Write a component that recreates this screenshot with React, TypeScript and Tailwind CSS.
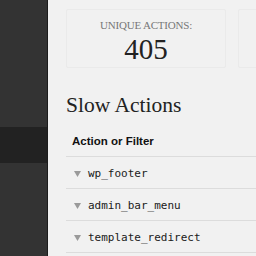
const rows = ["wp_footer", "admin_bar_menu", "template_redirect"]

const App = () => {
  return (
    <div className="flex h-screen w-full overflow-hidden bg-[#f1f1f1]">
      <div className="w-[48px] shrink-0 flex flex-col bg-[#333] border-r border-[#1c1c1c]">
        <div className="h-[127px]" />
        <div className="h-[36px] bg-[#222]" />
      </div>

      <div className="flex flex-col pl-[18px] pt-[9px] min-w-0">
        <div className="flex gap-[12px]">
          <div className="w-[160px] h-[59px] shrink-0 border border-[#eaeaea] rounded-[2px] flex flex-col items-center pt-[8px] font-['Liberation_Serif',serif]">
            <span className="text-[11px] leading-[14px] text-[#777] tracking-[-0.2px]">UNIQUE ACTIONS:</span>
            <span className="text-[29px] leading-[32px] text-[#222] mt-[1px]">405</span>
          </div>
          <div className="w-[160px] h-[59px] shrink-0 border border-[#eaeaea] rounded-[2px]" />
        </div>

        <h2 className="font-['Liberation_Serif',serif] text-[21.5px] leading-[28px] text-[#222] mt-[23px]">
          Slow Actions
        </h2>

        <div className="w-[260px] mt-[6px]">
          <div className="h-[32px] flex items-center pl-[6px] pt-[3px] border-b border-[#dcdcdc] font-['Liberation_Sans',sans-serif] font-bold text-[11.5px] text-[#111]">
            Action or Filter
          </div>
          {rows.map((r) => (
            <div key={r} className="h-[32px] flex items-center pt-[3px] border-b border-[#dcdcdc]">
              <svg width="7" height="6" viewBox="0 0 7 6" className="ml-[8px] mr-[7px]">
                <path d="M0 0h7L3.5 6z" fill="#9a9a9a" />
              </svg>
              <span className="font-['DejaVu_Sans_Mono',monospace] text-[11px] text-[#1a1a1a]">{r}</span>
            </div>
          ))}
        </div>
      </div>
    </div>
  )
}

export default App
